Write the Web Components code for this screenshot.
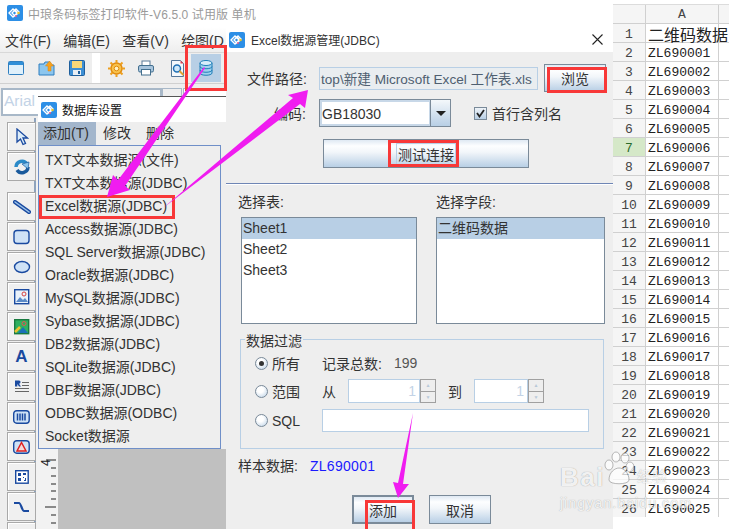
<!DOCTYPE html>
<html>
<head>
<meta charset="utf-8">
<title>Excel JDBC</title>
<style>
  html, body { margin: 0; padding: 0; background: #fff; }
  body { width: 729px; height: 529px; overflow: hidden; font-family: "Liberation Sans", "Noto Sans CJK SC", sans-serif; }
</style>
</head>
<body>
<print-screen></print-screen>

<script>
const LOGO = `<svg width="16" height="16" viewBox="0 0 16 16"><rect width="16" height="16" rx="2" fill="#2d8fe6"/><g fill="none" stroke="#fff" stroke-width="1.3"><path d="M2 8l4-4 4 4-4 4z"/><path d="M5 8l3-3 3 3-3 3z"/><path d="M7 6l2-2 3 3-2 2"/></g><circle cx="11.5" cy="8" r="1.3" fill="#e8c22c"/><circle cx="9" cy="11" r="1" fill="#e0578c"/></svg>`;

//Java metal button
class JButton extends HTMLElement {
  constructor() {
    super();
    this.attachShadow({ mode: "open" });
    this.shadowRoot.innerHTML = `
      <style>
        :host {
          display: flex;
          align-items: center;
          justify-content: center;
          box-sizing: border-box;
          border: 1px solid #7a8a99;
          background: linear-gradient(#dfe9f3 0, #fdfeff 22%, #f2f6fa 45%, #b8cfe5 100%);
          color: #333;
          font-size: 14px;
        }
        :host([default]) { border-width: 2px; }
        :host([focus]) span { outline: 1px solid #b8cfe5; padding: 0 1px; }
      </style>
      <span><slot></slot></span>`;
  }
}
customElements.define("j-button", JButton);

//Caja roja de anotacion
class RedBox extends HTMLElement {
  constructor() {
    super();
    this.attachShadow({ mode: "open" });
    this.shadowRoot.innerHTML = `
      <style>
        :host { position: absolute; box-sizing: border-box; border: 3px solid #f83838; display: block; }
      </style>`;
  }
}
customElements.define("red-box", RedBox);

class ToolButton extends HTMLElement {
  constructor() {
    super();
    this.attachShadow({ mode: "open" });
    this.shadowRoot.innerHTML = `
      <style>
        :host {
          display: flex;
          align-items: center;
          justify-content: center;
          box-sizing: border-box;
          width: 29px;
          height: 29px;
          margin-bottom: 1px;
          border: 1px solid #a9a9a9;
          background: #f0f0f0;
          box-shadow: inset 1px 1px 0 #fff;
        }
      </style>
      <slot></slot>`;
  }
}
customElements.define("tool-button", ToolButton);

class AppTitle extends HTMLElement {
  constructor() {
    super();
    this.attachShadow({ mode: "open" });
    this.shadowRoot.innerHTML = `
      <style>
        :host { display: flex; align-items: center; height: 27px; background: #fff; padding: 0 0 0 7px; color: #9a9a9a; font-size: 12px; white-space: nowrap; }
        svg { margin-right: 5px; margin-top: -1px; }
        span { letter-spacing: .1px; margin-top: -1px; }
      </style>
      ${LOGO}<span>中琅条码标签打印软件-V6.5.0 试用版 单机</span>`;
  }
}
customElements.define("app-title", AppTitle);

class AppMain extends HTMLElement {
  constructor() {
    super();
    this.attachShadow({ mode: "open" });
    this.shadowRoot.appendChild(this.getTemplate().content.cloneNode(true));
  }

  getTemplate() {
    const template = document.createElement("template");
    template.innerHTML = `
      ${this.getStyles()}
      <nav><span>文件(F)</span><span>编辑(E)</span><span>查看(V)</span><span>绘图(D</span></nav>
      <div class="toolbar">
        <svg class="i" style="margin-left:8px" width="16" height="16" viewBox="0 0 16 16"><rect x=".5" y="1.5" width="15" height="13" rx="1" fill="#dff0fb" stroke="#2f7fc0"/><rect x="1" y="2" width="14" height="3" fill="#2f8fd8"/></svg>
        <svg class="i" style="margin-left:14px" width="18" height="18" viewBox="0 0 18 18"><path d="M1 5h5l1-2h5v3h4v10H1z" fill="#8cc6ee" stroke="#2f7fc0"/><path d="M11.500 2l4 5h-2.500v5h-3V7H7.500z" fill="#f6a21e" stroke="#d98010" stroke-width=".5"/></svg>
        <svg class="i" style="margin-left:13px" width="16" height="16" viewBox="0 0 16 16"><rect x=".5" y=".5" width="15" height="15" rx="1" fill="#3d8fd4" stroke="#1f5f9c"/><rect x="3" y="1" width="10" height="7" fill="#f8d878"/><rect x="4" y="10" width="8" height="5" fill="#e8eef4"/><rect x="9" y="11" width="2" height="3" fill="#1f5f9c"/></svg>
        <div class="sep"></div>
        <svg class="i" style="margin-left:8px" width="17" height="17" viewBox="0 0 17 17"><circle cx="8.500" cy="8.500" r="5.500" fill="#f8c24a" stroke="#e08a10" stroke-width="1.400"/><circle cx="8.500" cy="8.500" r="2.300" fill="#fff3c4" stroke="#e08a10"/><path d="M8.500 0v3M8.500 14v3M0 8.500h3M14 8.500h3M2.500 2.500l2 2M12.500 12.500l2 2M2.500 14.500l2-2M12.500 4.500l2-2" stroke="#eda020" stroke-width="2"/></svg>
        <svg class="i" style="margin-left:13px" width="16" height="16" viewBox="0 0 16 16"><rect x="4" y="1" width="8" height="5" fill="#fff" stroke="#5a7a98"/><rect x=".5" y="5.500" width="15" height="6.500" rx="1.500" fill="#a8c4dc" stroke="#44708f"/><rect x="3.500" y="9.500" width="9" height="5.500" fill="#fff" stroke="#44708f"/></svg>
        <svg class="i" style="margin-left:16px" width="16" height="17" viewBox="0 0 16 17"><path d="M1.500.5h9l3 3v13h-12z" fill="#f4f8fc" stroke="#55779a"/><path d="M10.500.5v3h3" fill="#e04050"/><circle cx="7" cy="8.500" r="3.500" fill="#cfe8fa" stroke="#1f6fb4" stroke-width="1.500"/><path d="M9.500 11l4 4" stroke="#e0a030" stroke-width="2"/></svg>
        <div class="db">
          <svg width="14" height="16" viewBox="0 0 14 16"><g fill="#9fd0ee" stroke="#1f7fb8"><path d="M1 3v10c0 3 12 3 12 0V3"/><ellipse cx="7" cy="3" rx="6" ry="2.500" fill="#d8eefa"/><path d="M1 6.500c0 3 12 3 12 0M1 10c0 3 12 3 12 0" fill="none"/></g></svg>
        </div>
      </div>
      <div class="fontrow">
        <div class="fontname">Arial</div>
        <div class="fontarrow"></div>
        <div class="fontsize"></div>
      </div>
      <div class="body">
        <div class="tools">
          <tool-button><svg width="14" height="18" viewBox="0 0 14 18"><path d="M2 1v13l3.500-3 2.500 5.500 2.500-1L8 10h4.500z" fill="#dcecf9" stroke="#1a4aa0" stroke-width="1.300"/></svg></tool-button>
          <tool-button><svg width="18" height="18" viewBox="0 0 18 18"><path d="M3 9a6 6 0 0 1 11-3" fill="none" stroke="#2a8ac8" stroke-width="3.500"/><path d="M15 9a6 6 0 0 1-11 3" fill="none" stroke="#1a5a9c" stroke-width="3.500"/><path d="M9 6l7-2-1 7z" fill="#8cc6ee" stroke="#1a5a9c" stroke-width=".7"/></svg></tool-button>
          <div class="gap"></div>
          <tool-button><svg width="18" height="14" viewBox="0 0 18 14"><path d="M2 2l14 10" stroke="#1a4aa0" stroke-width="4" stroke-linecap="round"/><path d="M2 2l14 10" stroke="#9cc4ea" stroke-width="1.500" stroke-linecap="round"/></svg></tool-button>
          <tool-button><svg width="18" height="16" viewBox="0 0 18 16"><rect x="1" y="1.500" width="15" height="13" rx="3" fill="#cfe2f6" stroke="#1a4aa0" stroke-width="1.400"/></svg></tool-button>
          <tool-button><svg width="18" height="14" viewBox="0 0 18 14"><ellipse cx="9" cy="7" rx="7.500" ry="5.500" fill="#cfe2f6" stroke="#1a4aa0" stroke-width="1.400"/></svg></tool-button>
          <tool-button><svg width="16" height="16" viewBox="0 0 16 16"><rect x=".7" y=".7" width="14" height="14" fill="#eaf2fa" stroke="#1a4aa0" stroke-width="1.400"/><path d="M2 13l4-5 3 3 2-2 3 4z" fill="#5a8ac8"/><circle cx="10" cy="5" r="2" fill="none" stroke="#d84040"/></svg></tool-button>
          <tool-button><svg width="16" height="16" viewBox="0 0 16 16"><rect x=".7" y=".7" width="14" height="14" fill="#2fb060" stroke="#1a7a40" stroke-width="1.400"/><path d="M4 14l5-6 5 6z" fill="#1a70b8"/><circle cx="10" cy="4.500" r="2" fill="none" stroke="#e85050"/><path d="M1 13l5-5" stroke="#f0c030" stroke-width="2.500"/></svg></tool-button>
          <tool-button><span class="bigA">A</span></tool-button>
          <tool-button><svg width="16" height="14" viewBox="0 0 16 14"><path d="M1 .5h4c2 0 2 3 0 3.300L7 6.500H5L3.300 4v2.500H1z" fill="#1a4aa0"/><path d="M8 2.500h7M8 5.500h7M1 8.500h14M1 11.500h14" stroke="#666"/></svg></tool-button>
          <tool-button><svg width="17" height="14" viewBox="0 0 17 14"><rect x=".7" y=".7" width="15.500" height="12.500" rx="3" fill="#cfe2f6" stroke="#1a4aa0" stroke-width="1.400"/><path d="M4.500 3.500v7M7 3.500v7M9.500 3.500v7M12 3.500v7" stroke="#1a4aa0" stroke-width="1.500"/></svg></tool-button>
          <tool-button><svg width="17" height="14" viewBox="0 0 17 14"><rect x=".7" y=".7" width="15.500" height="12.500" rx="3" fill="#cfe2f6" stroke="#1a4aa0" stroke-width="1.400"/><path d="M8.500 2.500L13 11H4z" fill="#f6d8d8" stroke="#e02020" stroke-width="1.500"/></svg></tool-button>
          <tool-button><svg width="14" height="14" viewBox="0 0 14 14"><rect x=".7" y=".7" width="12.500" height="12.500" fill="#fff" stroke="#1a4aa0" stroke-width="1.400"/><path d="M3 3h3v3H3zM8 3h3v2H8zM3 8h3v3H3zM8 7h1v1H8zM10 8h1v3h-2v-1h1z" fill="#1a4aa0"/></svg></tool-button>
          <tool-button><svg width="17" height="12" viewBox="0 0 17 12"><path d="M1 2h5c2 0 3 8 5 8h5" fill="none" stroke="#1a4aa0" stroke-width="2.200"/></svg></tool-button>
          <tool-button></tool-button>
        </div>
        <div class="ruler">
          <svg width="20" height="80" viewBox="0 0 20 80">
            <text x="0" y="0" transform="translate(14 17) rotate(-90)" font-size="12" fill="#222" font-family="Liberation Sans">4</text>
            <path d="M10 11h10M15 19h5M15 27h5M15 35h5M15 42h5M15 50h5M9 58h11M15 66h5M15 74h5" stroke="#222"/>
          </svg>
        </div>
        <div class="canvas"></div>
      </div>`;
    return template;
  }

  getStyles() {
    return `
      <style>
        :host { display: block; width: 226px; height: 502px; overflow: hidden; color: #333; background: #eee; }
        nav { display: flex; gap: 12.300px; height: 25px; padding-left: 5px; box-sizing: border-box; padding-top: 5px; font-size: 14px; white-space: nowrap; background: linear-gradient(#fff, #eee); line-height: 18px; }
        .toolbar { display: flex; align-items: center; height: 32px; box-sizing: border-box; border-top: 1px solid #d8d8d8; border-bottom: 1px solid #d0d0d0; }
        .i { flex: none; }
        .sep { width: 8px; height: 30px; margin-left: 7px; background: #fff; flex: none; }
        .db { display: flex; align-items: center; justify-content: center; flex: none; width: 30px; height: 28px; margin-left: 5px; background: #b8cfe5; }
        .fontrow { display: flex; height: 34px; box-sizing: border-box; padding: 4px 0 2px 1px; }
        .fontname { box-sizing: border-box; width: 162px; border: 2px solid #a8b8c8; background: #fff; color: #c3d3e6; font-size: 15.500px; line-height: 22px; padding-left: 1px; }
        .fontarrow { box-sizing: border-box; width: 20px; border: 1px solid #a8b8c8; }
        .fontsize { box-sizing: border-box; width: 43px; border: 1px solid #a8b8c8; border-right: 0; margin-left: 1px; background: #fff; }
        .body { display: flex; height: 411px; }
        .tools { flex: none; width: 36px; padding: 4px 0 0 7px; box-sizing: border-box; border-right: 2px solid #8ea3bd; }
        .gap { height: 10px; }
        .bigA { color: #1a4aa0; font-weight: bold; font-size: 17px; line-height: 20px; }
        .ruler { flex: none; width: 22px; background: #f2f2f2; padding-top: 331px; box-sizing: border-box; }
        .ruler svg { display: block; }
        .canvas { flex: 1; margin-top: 272px; background: linear-gradient(#868686 0, #c0c0c0 14px); }
      </style>`;
  }
}
customElements.define("app-main", AppMain);

class DbWindow extends HTMLElement {
  constructor() {
    super();
    this.attachShadow({ mode: "open" });
    const items = ["TXT文本数据源(文件)", "TXT文本数据源(JDBC)", "Excel数据源(JDBC)", "Access数据源(JDBC)", "SQL Server数据源(JDBC)", "Oracle数据源(JDBC)", "MySQL数据源(JDBC)", "Sybase数据源(JDBC)", "DB2数据源(JDBC)", "SQLite数据源(JDBC)", "DBF数据源(JDBC)", "ODBC数据源(ODBC)", "Socket数据源"];
    this.shadowRoot.innerHTML = `
      <style>
        :host { position: absolute; left: 38px; top: 96px; width: 188px; height: 353px; display: block; background: #eee; border-top: 1px solid #555; box-sizing: border-box; color: #333; font-size: 14px; }
        .title { display: flex; align-items: center; height: 25px; background: #fff; color: #111; padding-left: 3px; gap: 5px; font-size: 12px; }
        .bar { display: flex; height: 23px; line-height: 23px; background: #eee; }
        .bar span { margin-left: 7px; }
        .bar span:nth-child(3) { margin-left: 15px; }
        .bar .on { background: #a3b6cc; margin-left: 0; padding: 0 5px; width: 48px; }
        .menu { box-sizing: border-box; width: 183px; height: 304px; border: 1px solid #6f8fc8; padding: 3px 0 0 6px; background: #eee; }
        .menu div { height: 23px; line-height: 23px; white-space: nowrap; }
      </style>
      <div class="title">${LOGO}<span>数据库设置</span></div>
      <div class="bar"><span class="on">添加(T)</span><span>修改</span><span>删除</span></div>
      <div class="menu">${items.map((t) => `<div>${t}</div>`).join("")}</div>`;
  }
}
customElements.define("db-window", DbWindow);

class ListBox extends HTMLElement {
  constructor() {
    super();
    this.attachShadow({ mode: "open" });
    this.shadowRoot.innerHTML = `
      <style>
        :host { display: block; box-sizing: border-box; height: 107px; border: 1px solid #7a8a99; background: #fff; color: #333; font-size: 14px; overflow: hidden; }
        ::slotted(div) { height: 21px; line-height: 21px; padding-left: 1px; }
        ::slotted(.on) { background: #b8cfe5; }
      </style>
      <slot></slot>`;
  }
}
customElements.define("list-box", ListBox);

class RadioRow extends HTMLElement {
  constructor() {
    super();
    this.attachShadow({ mode: "open" });
    const on = this.hasAttribute("checked");
    this.shadowRoot.innerHTML = `
      <style>
        :host { display: flex; align-items: center; color: #333; font-size: 14px; white-space: nowrap; }
        .r { flex: none; box-sizing: border-box; width: 13px; height: 13px; border-radius: 50%; border: 1px solid #7a8a99; background: radial-gradient(circle at 40% 35%, #fff 30%, #b8cfe5 100%); display: flex; align-items: center; justify-content: center; }
        .r i { width: 5px; height: 5px; border-radius: 50%; background: #333; }
        .l { width: 50px; margin-left: 4px; flex: none; }
      </style>
      <div class="r">${on ? "<i></i>" : ""}</div><div class="l">${this.getAttribute("label")}</div><slot></slot>`;
  }
}
customElements.define("radio-row", RadioRow);

class SpinBox extends HTMLElement {
  constructor() {
    super();
    this.attachShadow({ mode: "open" });
    this.shadowRoot.innerHTML = `
      <style>
        :host { display: flex; box-sizing: border-box; height: 24px; color: #c3d3e6; font-size: 14px; }
        .v { flex: 1; border: 1px solid #b8cfe5; background: #fff; text-align: right; line-height: 22px; padding-right: 3px; }
        .b { flex: none; box-sizing: border-box; width: 16px; border: 1px solid #a0a0a0; display: grid; grid-template-rows: 1fr 1fr; background: #eee; }
        .b span { display: flex; align-items: center; justify-content: center; font-size: 5px; color: #b8c8d8; line-height: 1; }
        .b span + span { border-top: 1px solid #a0a0a0; }
      </style>
      <div class="v">1</div><div class="b"><span>▲</span><span>▼</span></div>`;
  }
}
customElements.define("spin-box", SpinBox);

class ExcelDialog extends HTMLElement {
  constructor() {
    super();
    this.attachShadow({ mode: "open" });
    this.shadowRoot.appendChild(this.getTemplate().content.cloneNode(true));
  }

  getTemplate() {
    const template = document.createElement("template");
    template.innerHTML = `
      ${this.getStyles()}
      <header>
        ${LOGO}<span>Excel数据源管理(JDBC)</span>
        <svg class="x" width="11" height="11" viewBox="0 0 11 11"><path d="M.5.5l10 10M10.500.5l-10 10" stroke="#222" stroke-width="1.100"/></svg>
      </header>
      <section class="top">
        <div class="row r1">
          <label>文件路径:</label>
          <div class="path">top\\新建 Microsoft Excel 工作表.xls</div>
          <j-button style="width:62px;height:28px;margin-left:6px">浏览</j-button>
        </div>
        <div class="row r2">
          <label>编码:</label>
          <div class="combo"><div class="val">GB18030</div><div class="arrow"><i></i></div></div>
          <div class="chk"><svg width="9" height="9" viewBox="0 0 9 9"><path d="M1 4l2.500 3.500L8 1" fill="none" stroke="#222" stroke-width="1.800"/></svg></div>
          <span class="chkl">首行含列名</span>
        </div>
        <j-button focus style="width:206px;height:29px;margin:12px 0 0 97px">测试连接</j-button>
      </section>
      <section class="mid">
        <div class="col c1"><div class="cap">选择表:</div>
          <list-box style="margin-left:3px"><div class="on">Sheet1</div><div>Sheet2</div><div>Sheet3</div></list-box></div>
        <div class="col c2"><div class="cap">选择字段:</div>
          <list-box><div class="on">二维码数据</div></list-box></div>
      </section>
      <fieldset>
        <legend><span>数据过滤</span></legend>
        <radio-row checked label="所有" style="height:22px"><span>记录总数:</span><span class="n">199</span></radio-row>
        <radio-row label="范围" style="height:24px;margin-top:5px"><span style="width:26px">从</span><spin-box style="width:88px"></spin-box><span style="width:26px;margin-left:12px">到</span><spin-box style="width:70px"></spin-box></radio-row>
        <radio-row label="SQL" style="height:23px;margin-top:6px"><div class="sql"></div></radio-row>
      </fieldset>
      <div class="sample"><span>样本数据:</span><b>ZL690001</b></div>
      <div class="actions">
        <j-button default style="width:62px;height:29px">添加</j-button>
        <j-button style="width:62px;height:29px">取消</j-button>
      </div>`;
    return template;
  }

  getStyles() {
    return `
      <style>
        :host { display: block; width: 387px; height: 502px; background: #eee; color: #333; font-size: 14px; overflow: hidden; }
        header { display: flex; align-items: center; height: 25px; background: #fff; padding-left: 3px; gap: 6px; font-size: 12px; white-space: nowrap; position: relative; }
        header svg.x { margin-left: auto; margin-right: 10px; }
        .top { box-sizing: border-box; height: 132px; padding-top: 12px; border-bottom: 1px solid #6f86b5; box-shadow: 0 1px 0 #fff; }
        .row { display: flex; align-items: center; height: 28px; }
        .r2 { margin-top: 7px; }
        label { box-sizing: border-box; width: 93px; padding-left: 21px; text-align: right; padding-right: 13px; white-space: nowrap; flex: none; }
        .path { box-sizing: border-box; width: 219px; height: 23px; line-height: 23px; border: 1px solid #b8cfe5; background: #e9edf0; color: #4f5f70; padding-left: 1px; font-size: 13.600px; white-space: nowrap; overflow: hidden; }
        .combo { display: flex; box-sizing: border-box; width: 132px; height: 28px; border: 1px solid #7a8a99; }
        .val { flex: 1; background: #fff; border: 2px solid #c8d8e8; border-right-width: 1px; line-height: 24px; padding-left: 0; font-size: 14px; }
        .arrow { flex: none; width: 19px; border-left: 1px solid #7a8a99; display: flex; align-items: center; justify-content: center; background: linear-gradient(#f4f8fb, #b8cfe5); }
        .arrow i { border: 5px solid transparent; border-top: 5px solid #222; border-bottom: 0; width: 0; height: 0; border-left-width: 5px; border-right-width: 5px; }
        .chk { display: flex; align-items: center; justify-content: center; box-sizing: border-box; width: 13px; height: 13px; margin-left: 23px; border: 1px solid #7a8a99; background: linear-gradient(#eef3f8, #b8cfe5); flex: none; }
        .chkl { margin-left: 5px; }
        .mid { display: flex; padding-top: 8px; height: 145px; box-sizing: border-box; margin-top: 2px; }
        .c1 { margin-left: 12px; width: 179px; }
        .c2 { margin-left: 19px; width: 169px; }
        .cap { height: 16px; line-height: 16px; margin-bottom: 7px; white-space: nowrap; }
        fieldset { box-sizing: border-box; width: 364px; height: 118px; margin: 0 0 0 14px; padding: 5px 0 0 14px; border: 1px solid #b8cfe5; }
        legend { padding: 0 1px; margin-left: -10px; line-height: 16px; font-size: 14px; }
        legend span { display: block; margin-top: 2px; margin-bottom: -2px; }
        .n { margin-left: 12px; color: #555; }
        .sql { width: 267px; height: 23px; box-sizing: border-box; border: 1px solid #b8cfe5; background: #fff; }
        .sample { display: flex; height: 18px; line-height: 18px; margin: 8px 0 0 12px; }
        .sample b { font-weight: normal; color: #1a1aff; margin-left: 12px; letter-spacing: .3px; }
        .actions { display: flex; gap: 15px; margin: 20px 0 0 126px; }
      </style>`;
  }
}
customElements.define("excel-dialog", ExcelDialog);

class SheetView extends HTMLElement {
  constructor() {
    super();
    this.attachShadow({ mode: "open" });
    let rows = `<div class="n">1</div><div class="c t">二维码数据</div><div class="e"></div>`;
    for (let i = 2; i <= 26; i++) {
      const code = "ZL69" + String(i - 1).padStart(4, "0");
      rows += `<div class="n${i === 7 ? " sel" : ""}">${i}</div><div class="c">${code}</div><div class="e"></div>`;
    }
    this.shadowRoot.innerHTML = `
      <style>
        :host { display: block; width: 116px; height: 529px; background: #fff; overflow: hidden; font-family: "Liberation Mono", "Noto Sans CJK SC", monospace; font-size: 13px; color: #222; }
        .grid { display: grid; grid-template-columns: 33px 73px 10px; grid-auto-rows: 19px; margin-top: 4px; height: 512px; overflow: hidden; grid-template-rows: 19px; border-top: 1px solid #dcdcdc; }
        .grid > div { box-sizing: border-box; border-right: 1px solid #d0d0d0; border-bottom: 1px solid #d0d0d0; line-height: 21px; white-space: nowrap; }
        .grid > .h { line-height: 19px; }
        .n, .h { background: #f5f5f5; text-align: center; color: #444; }
        .h.a { background: #f5f5f5; }
        .c { padding-left: 2px; }
        .grid > .t { font-family: "Noto Sans CJK SC", sans-serif; font-size: 16px; line-height: 20px; }
        .e { border-right: 0 !important; }
        .sel { background: #d5e8c8; color: #2a6a2a; }
      </style>
      <div class="grid">
        <div class="h"></div><div class="h a">A</div><div class="h e"></div>
        ${rows}
      </div>`;
  }
}
customElements.define("sheet-view", SheetView);

class BaiduMark extends HTMLElement {
  constructor() {
    super();
    this.attachShadow({ mode: "open" });
    this.shadowRoot.innerHTML = `
      <style>
        :host { position: absolute; left: 560px; top: 454px; width: 140px; height: 66px; display: block; pointer-events: none; color: rgba(255,255,255,.9); text-shadow: 0 0 1px rgba(100,100,100,.7); white-space: nowrap; font-family: "Liberation Sans", "Noto Sans CJK SC", sans-serif; }
        .logo { display: flex; align-items: flex-start; font-weight: bold; font-size: 26px; line-height: 30px; margin-top: 8px; letter-spacing: 1.500px; }
        svg { margin: -12px 0 0 -4px; opacity: .85; }
        .jing { font-size: 14.500px; letter-spacing: .9px; opacity: .85; line-height: 18px; margin-top: 2px; }
        .cn { font-size: 15px; font-weight: normal; margin-left: 2px; line-height: 30px; opacity: .75; letter-spacing: 0; }
      </style>
      <div class="logo"><span>Bai</span>
        <svg width="34" height="36" viewBox="0 0 34 36"><g fill="rgba(255,255,255,.85)" stroke="rgba(110,110,110,.55)"><ellipse cx="8" cy="15" rx="4" ry="5"/><ellipse cx="15" cy="7" rx="4" ry="5"/><ellipse cx="24" cy="8" rx="4" ry="5"/><ellipse cx="29" cy="17" rx="4" ry="5"/><path d="M8 30c0-8 6-12 10-12s10 4 10 12c0 5-20 5-20 0z"/></g></svg>
        <span class="cn">经验</span></div>
      <div class="jing">jingyan.baidu.com</div>`;
  }
}
customElements.define("baidu-mark", BaiduMark);

class PrintScreen extends HTMLElement {
  constructor() {
    super();
    this.attachShadow({ mode: "open" });
    this.shadowRoot.innerHTML = `
      <style>
        :host { display: flex; position: relative; width: 729px; height: 529px; overflow: hidden; }
        .left { width: 613px; flex: none; }
        .windows { display: flex; }
        svg.arrows { position: absolute; left: 0; top: 0; }
      </style>
      <div class="left">
        <app-title></app-title>
        <div class="windows"><app-main></app-main><excel-dialog></excel-dialog></div>
      </div>
      <sheet-view></sheet-view>
      <db-window></db-window>
      <baidu-mark></baidu-mark>
      <red-box style="left:185px;top:45px;width:42px;height:46px"></red-box>
      <red-box style="left:39px;top:195px;width:136px;height:24px"></red-box>
      <red-box style="left:547px;top:67px;width:60px;height:26px"></red-box>
      <red-box style="left:388px;top:140px;width:71px;height:27px"></red-box>
      <red-box style="left:365px;top:500px;width:50px;height:32px"></red-box>
      <svg class="arrows" width="729" height="529" viewBox="0 0 729 529">
        <g fill="#f01cf0">
          <polygon points="204,67 205,68 125,186 130,190 107,197 113,175 118,180"/>
          <polygon points="163,208 293,98 288,95 308,90 305,108 300,104"/>
          <polygon points="413,413 403,484 409,484 398,498 393,482 398,483"/>
        </g>
      </svg>`;
  }
}
customElements.define("print-screen", PrintScreen);
</script>
</body>
</html>
